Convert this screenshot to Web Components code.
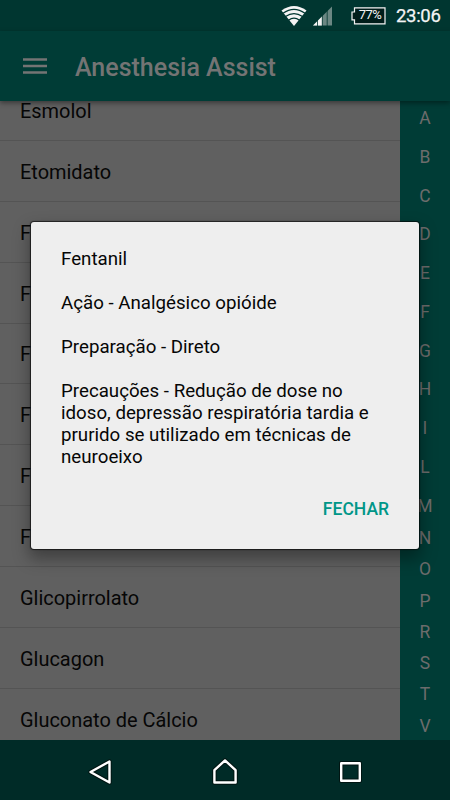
<!DOCTYPE html>
<html lang="pt">
<head>
<meta charset="utf-8">
<title>Anesthesia Assist</title>
<style>
html,body{margin:0;height:100%;overflow:hidden;background:#606060}
body{font-family:Roboto,"Liberation Sans",sans-serif}
</style>
</head>
<body>
<assist-screen></assist-screen>
<script>
const define = (name, html, setup) => customElements.define(name, class extends HTMLElement {
  constructor() {
    super();
    this.attachShadow({mode: "open"}).innerHTML = html;
  }
  connectedCallback() { if (setup) setup(this); }
});

define("status-bar", `<style>
:host{display:flex;align-items:center;height:31px;box-sizing:border-box;padding:0 10px 0 0;justify-content:flex-end;background:#003630;color:#f4f4f4}
svg{display:block;flex:none}
.battery{position:relative;width:35px;height:18px;margin-left:18px}
.battery span{position:absolute;left:3px;right:0;top:-1px;text-align:center;font-size:13px;line-height:18px;font-weight:400;letter-spacing:-.5px}
.clock{font-size:18.500px;line-height:31px;padding-top:1px;font-weight:400;-webkit-text-stroke:.25px #f4f4f4;margin-left:10px;width:44px;white-space:nowrap;letter-spacing:-.3px}
</style>
<svg width="26" height="22" viewBox="0 0 26 22"><path d="M.5 5.5Q13-3.5 25.5 5.500L13 21Z" fill="#f4f4f4"/><g fill="none" stroke="#003630" stroke-width="1.2"><path d="M2 8.300Q13 .3 24 8.300"/><path d="M4.500 11.600Q13 5.500 21.500 11.600"/><path d="M7.500 15.200Q13 11 18.500 15.200"/></g></svg>
<svg width="20" height="20" viewBox="0 0 20 20" style="margin-left:6px"><path d="M0 19.500L19 .5V19.500Z" fill="#6b8783"/><path d="M0 19.500L9 10.500V19.500Z" fill="#f4f4f4"/><path d="M4.500 13V20M9.300 8V20M14.200 3V20" stroke="#003630" stroke-width=".8"/></svg>
<div class="battery"><svg width="35" height="18" viewBox="0 0 35 18"><path d="M3.500 .8H34V16.800H3.500V12.800H1V5H3.500Z" fill="#001d1a" stroke="#f4f4f4" stroke-width="1.200"/></svg><span>77%</span></div>
<div class="clock">23:06</div>`);

define("app-bar", `<style>
:host{display:flex;align-items:center;height:70px;box-sizing:border-box;padding-left:23px;background:#003c36;color:#747474;box-shadow:0 2px 5px rgba(0,0,0,.42);position:relative;z-index:1}
svg{display:block;margin-right:28px}
h1{margin:4px 0 0;font-size:25px;line-height:30px;font-weight:500;white-space:nowrap}
</style><svg width="24" height="18" viewBox="0 0 24 18"><path d="M0 2.500H24M0 9H24M0 15.500H24" stroke="#747474" stroke-width="2.600"/></svg><h1><slot></slot></h1>`);

define("drug-row", `<style>
:host{display:flex;align-items:center;height:60.880px;box-sizing:border-box;padding:2px 0 0 20px;border-bottom:1px solid #545454;font-size:19.950px;line-height:24px;color:#060606;white-space:nowrap;flex:none}
</style><slot></slot>`);

define("drug-list", `<style>
:host{display:flex;flex-direction:column;flex:1;min-width:0;overflow:hidden;background:#606060}
drug-row:first-of-type{margin-top:-21px}
drug-row:last-of-type{border-bottom-color:transparent}
</style>`, host => {
  for (const name of ["Esmolol","Etomidato","F","F","F","F","F","F","Glicopirrolato","Glucagon","Gluconato de Cálcio"]) {
    const row = document.createElement("drug-row");
    row.textContent = name;
    host.shadowRoot.append(row);
  }
});

define("letter-index", `<style>
:host{display:flex;flex-direction:column;width:50px;box-sizing:border-box;padding-top:7px;background:#003c36;color:#6c6c6c;font-size:17.500px;line-height:21px;text-align:center;overflow:hidden}
span{flex:none;height:38.750px}
span.short{height:31.300px}
span.mid{height:32.500px}
</style>`, host => {
  for (const letter of "ABCDEFGHILMNOPRSTV") {
    const cell = document.createElement("span");
    cell.textContent = letter;
    if (letter >= "M") cell.className = letter === "M" ? "mid" : "short";
    host.shadowRoot.append(cell);
  }
});

define("nav-bar", `<style>
:host{display:flex;align-items:center;justify-content:space-between;height:60px;box-sizing:border-box;padding:4px 87px 0;background:#002b27}
svg{display:block}
path{fill:none;stroke:#fff;stroke-width:2.400;stroke-linejoin:round}
path.edge{stroke:#001512;stroke-width:4.400}
</style>
<svg width="26" height="28" viewBox="0 0 26 28"><path class="edge" d="M3.500 14L22.500 3.500V24.500Z"/><path d="M3.500 14L22.500 3.500V24.500Z"/></svg>
<svg width="28" height="28" viewBox="0 0 28 28"><path class="edge" d="M3.400 24.500V12.200L14 2.400L24.600 12.200V24.500Z"/><path d="M3.400 24.500V12.200L14 2.400L24.600 12.200V24.500Z"/></svg>
<svg width="26" height="28" viewBox="0 0 26 28"><path class="edge" d="M4.200 5.200H22.800V22.800H4.200Z"/><path d="M4.200 5.200H22.800V22.800H4.200Z"/></svg>`);

define("drug-dialog", `<style>
:host{display:block;position:absolute;left:31px;top:222px;width:388px;height:327px;box-sizing:border-box;padding:26px 30px 0;background:#eee;border-radius:3px;box-shadow:0 0 1px 1px rgba(0,0,0,.65),0 8px 16px 2px rgba(0,0,0,.34);color:#060606;font-size:18.720px;line-height:22px;z-index:2}
::slotted(p){margin:0 0 22.100px;white-space:nowrap}
footer{display:flex;justify-content:flex-end;padding-top:8px;color:#009688;font-size:17.500px;line-height:22px;font-weight:500}
</style><slot></slot><footer><slot name="action"></slot></footer>`);

define("assist-screen", `<style>
:host{display:flex;flex-direction:column;width:450px;height:800px;overflow:hidden;position:relative;background:#606060}
main{display:flex;flex:1;min-height:0}
</style><status-bar></status-bar><app-bar>Anesthesia Assist</app-bar><main><drug-list></drug-list><letter-index></letter-index></main><nav-bar></nav-bar>
<drug-dialog><p>Fentanil</p><p>Ação - Analgésico opióide</p><p>Preparação - Direto</p><p>Precauções - Redução de dose no<br>idoso, depressão respiratória tardia e<br>prurido se utilizado em técnicas de<br>neuroeixo</p><span slot="action">FECHAR</span></drug-dialog>`);
</script>
</body>
</html>
